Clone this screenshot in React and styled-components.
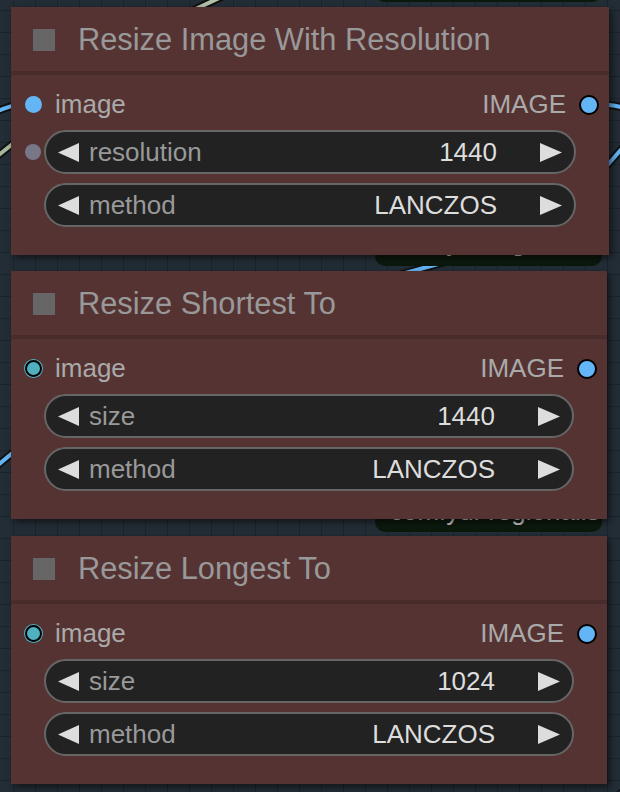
import React from 'react';
import styled, { createGlobalStyle } from 'styled-components';

const Global = createGlobalStyle`
  body {
    margin: 0;
    background: #232d36;
    font-family: 'Liberation Sans', Arial, sans-serif;
  }
`;

const Canvas = styled.div`
  position: relative;
  width: 620px;
  height: 792px;
  overflow: hidden;
  background-color: #232d36;
  background-image: linear-gradient(#1b242c 1px, transparent 1px),
    linear-gradient(90deg, #1b242c 1px, transparent 1px);
  background-size: 22px 22px;
  background-position: 13px 10px;
`;

const Wires = styled.svg`
  position: absolute;
  inset: 0;
  z-index: 0;
`;

/* nodes behind, mostly hidden */
const GhostNode = styled.div`
  position: absolute;
  left: 375px;
  width: 227px;
  top: ${(p) => p.$top}px;
  height: ${(p) => p.$h}px;
  z-index: 1;
  background: #0c190d;
  border-radius: 10px;
  display: flex;
  align-items: flex-end;
  padding: 0 0 ${(p) => p.$pb || 7}px 15px;
  box-sizing: border-box;
  color: #c4c4c4;
  font-size: 26px;
  line-height: 26px;
`;

const Stack = styled.div`
  position: relative;
  z-index: 2;
  display: flex;
  flex-direction: column;
  padding-left: 11px;
`;

const Node = styled.div`
  width: ${(p) => p.$w}px;
  margin-top: ${(p) => p.$top}px;
  background: #553333;
  box-shadow: 3px 3px 7px rgba(0, 0, 0, 0.55);
`;

const TitleBar = styled.div`
  height: 62px;
  padding: 2px 0 0 22px;
  display: flex;
  align-items: center;
  gap: 23px;
  border-bottom: 4px solid #482c2c;
  color: #999;
  font-size: 30.8px;
`;

const Collapse = styled.span`
  width: 22px;
  height: 22px;
  background: #666;
`;

const Body = styled.div`
  padding: 4px 0 28px;
`;

const SlotRow = styled.div`
  height: 51px;
  display: flex;
  align-items: center;
  padding: 0 10px 0 14px;
  font-size: 26px;
  color: #aaa;
`;

const InDot = styled.span`
  width: 17px;
  height: 17px;
  border-radius: 50%;
  box-sizing: border-box;
  background: ${(p) => (p.$linked ? '#64b5f6' : '#4fb0c0')};
  border: ${(p) => (p.$linked ? 'none' : '2px solid #000')};
  box-shadow: ${(p) => (p.$linked ? 'none' : '0 0 0 1px #4fb0c0')};
  margin-right: 13px;
`;

const OutLabel = styled.span`
  margin-left: auto;
  margin-right: 13px;
`;

const OutDot = styled.span`
  width: 20px;
  height: 20px;
  border-radius: 50%;
  box-sizing: border-box;
  background: #64b5f6;
  border: 2px solid #000;
`;

const Widgets = styled.div`
  display: flex;
  flex-direction: column;
  gap: 9px;
`;

const WidgetRow = styled.div`
  display: grid;
  grid-template-columns: 33px 1fr 33px;
  align-items: center;
`;

const WidgetDot = styled.span`
  justify-self: end;
  margin-right: 3px;
  width: 16px;
  height: 16px;
  border-radius: 50%;
  background: #778;
`;

const Widget = styled.div`
  grid-column: 2;
  height: 44px;
  box-sizing: border-box;
  border: 2px solid #666;
  border-radius: 22px;
  background: #222;
  display: flex;
  align-items: center;
  padding: 0 12px;
  font-size: 26px;
`;

const Label = styled.span`
  flex: 1;
  margin-left: 9px;
  color: #999;
`;

const Value = styled.span`
  color: #ddd;
  margin-right: 43px;
`;

const Arrow = ({ dir }) => (
  <svg width="22" height="19" viewBox="0 0 22 19">
    {dir === 'left' ? (
      <polygon points="21,0 21,19 0,9.5" fill="#ddd" />
    ) : (
      <polygon points="0,0 0,19 22,9.5" fill="#ddd" />
    )}
  </svg>
);

const ComboWidget = ({ label, value, slot }) => (
  <WidgetRow>
    {slot ? <WidgetDot /> : <span />}
    <Widget>
      <Arrow dir="left" />
      <Label>{label}</Label>
      <Value>{value}</Value>
      <Arrow dir="right" />
    </Widget>
  </WidgetRow>
);

const ResizeNode = ({ title, width, top, linked, widgets }) => (
  <Node $w={width} $top={top}>
    <TitleBar>
      <Collapse />
      <span>{title}</span>
    </TitleBar>
    <Body>
      <SlotRow>
        <InDot $linked={linked} />
        <span>image</span>
        <OutLabel>IMAGE</OutLabel>
        <OutDot />
      </SlotRow>
      <Widgets>
        {widgets.map((w) => (
          <ComboWidget key={w.label} {...w} />
        ))}
      </Widgets>
    </Body>
  </Node>
);

const nodes = [
  {
    title: 'Resize Image With Resolution',
    width: 598,
    top: 7,
    linked: true,
    widgets: [
      { label: 'resolution', value: '1440', slot: true },
      { label: 'method', value: 'LANCZOS' },
    ],
  },
  {
    title: 'Resize Shortest To',
    width: 596,
    top: 16,
    widgets: [
      { label: 'size', value: '1440' },
      { label: 'method', value: 'LANCZOS' },
    ],
  },
  {
    title: 'Resize Longest To',
    width: 596,
    top: 17,
    widgets: [
      { label: 'size', value: '1024' },
      { label: 'method', value: 'LANCZOS' },
    ],
  },
];

const Wire = ({ d, color }) => (
  <g fill="none" strokeLinecap="round">
    <path d={d} stroke="#111" strokeWidth="8" />
    <path d={d} stroke={color} strokeWidth="4" />
  </g>
);

export default function App() {
  return (
    <>
      <Global />
      <Canvas>
        <Wires width="620" height="792">
          <Wire d="M185 14 L232 -8" color="#b4c4aa" />
          <Wire d="M-20 120 C -5 112, 10 104, 30 103" color="#64b5f6" />
          <Wire d="M-20 170 L30 130" color="#a7b89b" />
          <Wire d="M595 104 C 610 104, 618 106, 640 112" color="#64b5f6" />
          <Wire d="M640 128 L590 185" color="#64b5f6" />
          <Wire d="M460 258 L380 280" color="#64b5f6" />
          <Wire d="M-20 480 L40 430" color="#64b5f6" />
          <Wire d="M650 770 L600 810" color="#64b5f6" />
        </Wires>
        <GhostNode $top={-40} $h={42} />
        <GhostNode $top={200} $h={66} $pb={11}>comfyui-regionalis</GhostNode>
        <GhostNode $top={470} $h={62} $pb={8}>comfyui-regionalis</GhostNode>
        <Stack>
          {nodes.map((n) => (
            <ResizeNode key={n.title} {...n} />
          ))}
        </Stack>
      </Canvas>
    </>
  );
}
